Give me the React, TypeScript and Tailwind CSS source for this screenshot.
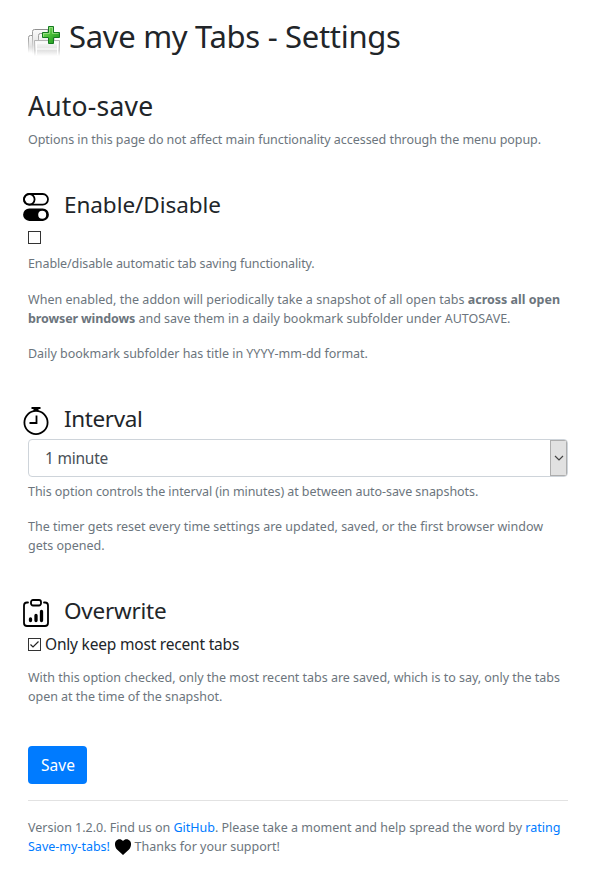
import React from 'react';

const Line = ({ className = '', children }: { className?: string; children: React.ReactNode }) => (
  <span className={`block w-fit whitespace-nowrap ${className}`}>{children}</span>
);

const Note = ({ className = '', children }: { className?: string; children: React.ReactNode }) => (
  <p className={`text-[12.5px] leading-[19.2px] text-[#6c757d] ${className}`}>{children}</p>
);

const Heading = ({ icon, className = '', children }: { icon: React.ReactNode; className?: string; children: React.ReactNode }) => (
  <h3 className="-ml-[5px] flex h-[30px] items-center">
    <span className="mt-1 w-[41px] shrink-0">{icon}</span>
    <span className={`whitespace-nowrap text-[22.5px] leading-[30px] ${className}`}>{children}</span>
  </h3>
);

const TabsIcon = () => (
  <svg width="32" height="32" viewBox="0 0 32 32" className="shrink-0">
    <defs>
      <linearGradient id="paper" x2="0" y2="1"><stop stopColor="#fafafa" /><stop offset=".65" stopColor="#e2e2e2" /><stop offset="1" stopColor="#fff" /></linearGradient>
      <linearGradient id="edge" x2="0" y2="1"><stop stopColor="#909090" /><stop offset=".6" stopColor="#ccc" /><stop offset="1" stopColor="#fff" /></linearGradient>
      <linearGradient id="front" x2="0" y2="1"><stop stopColor="#b4b4b4" /><stop offset=".6" stopColor="#d0d0d0" /><stop offset="1" stopColor="#fff" /></linearGradient>
      <linearGradient id="plus" x2="1" y2="1"><stop stopColor="#8fe070" /><stop offset=".5" stopColor="#45bd35" /><stop offset="1" stopColor="#168d1a" /></linearGradient>
    </defs>
    <g fill="url(#paper)" stroke="url(#edge)">
      <path d="M.5 28V12.500q0-2 2-2H20V28" />
      <path d="M4.500 29V6.500q0-2 2-2H20V29" />
      <path d="M10.500 29V10.500q0-2 2-2H26V29" />
    </g>
    <path d="M6.500 31V15.500h25V31" fill="url(#paper)" stroke="url(#front)" />
    <path d="M8.500 30V17.500M29.500 30V17.500M8 18h22M8 24h22" stroke="#fff" />
    <path d="M20.500 1.500h5v6h6v5h-6v6h-5v-6h-6v-5h6z" fill="url(#plus)" stroke="#147a20" />
    <path d="M21.500 8.500v-6h3v6h6M15.500 11.500v-3h6" fill="none" stroke="#b5eba0" strokeOpacity=".6" />
  </svg>
);

const SwitchIcon = () => (
  <svg width="26" height="28" viewBox="0 0 26 28" fill="none" stroke="#000" strokeWidth="1.800">
    <rect x="1" y="1" width="24" height="10.600" rx="5.300" /><circle cx="6.300" cy="6.300" r="5.300" />
    <rect x="1" y="16.400" width="24" height="10.600" rx="5.300" fill="#000" /><circle cx="19.200" cy="21.700" r="4.900" fill="#fff" />
  </svg>
);

const TimerIcon = () => (
  <svg width="26" height="28" viewBox="0 0 26 28" fill="none" stroke="#000" strokeWidth="1.800">
    <circle cx="13" cy="15.500" r="11.600" /><path d="M8.500 1h9M10.500 3h5M13.500 8.500v7.500H6.500" />
  </svg>
);

const ClipboardIcon = () => (
  <svg width="26" height="28" viewBox="0 0 26 28" fill="none" stroke="#000" strokeWidth="1.800" strokeLinecap="round">
    <path d="M5 3.500H4Q1 3.500 1 6.500V24q0 3 3 3h18q3 0 3-3V6.500q0-3-3-3h-1" />
    <rect x="8" y="1" width="10" height="5.500" rx="2" />
    <path d="M7.500 20v1.500M13 16.500v5M18.500 12.500v9" strokeWidth="3.300" />
  </svg>
);

const Checkbox = ({ checked = false }: { checked?: boolean }) => (
  <span className="flex size-[13px] shrink-0 border border-[#333] bg-white">
    {checked && <svg width="11" height="11" viewBox="0 0 11 11" fill="none"><path d="m1.500 5.500 2.500 2.500 5.500-5.500" stroke="#222" strokeWidth="1.200" /></svg>}
  </span>
);

export default function App() {
  return (
    <main className="flex h-[889px] flex-col items-stretch overflow-hidden bg-white pl-7 pr-[31px] pt-4 font-['Noto_Sans',sans-serif] text-[#212529]">
      <h1 className="flex h-10 items-center gap-[9px] whitespace-nowrap text-[31px] leading-10 tracking-[-0.31px]"><span className="mt-[9px]"><TabsIcon /></span>Save my Tabs - Settings</h1>
      <h2 className="mt-[33px] h-[34px] text-[26.5px] leading-[34px] tracking-[0.22px]">Auto-save</h2>
      <Note className="mt-[7px]"><Line className="tracking-[-0.050px]">Options in this page do not affect main functionality accessed through the menu popup.</Line></Note>

      <section className="mt-[41px]">
        <Heading icon={<SwitchIcon />} className="tracking-[-0.06px]">Enable/Disable</Heading>
        <div className="mt-[11px]"><Checkbox /></div>
        <Note className="mt-[10px]"><Line className="tracking-[-0.1px]">Enable/disable automatic tab saving functionality.</Line></Note>
        <Note className="mt-[16.4px]">
          <Line><span className="tracking-[0.022px]">When enabled, the addon will periodically take a snapshot of all open tabs </span><b>across all open</b></Line>
          <Line><b className="tracking-[-0.13px]">browser windows</b> and save them in a daily bookmark subfolder under AUTOSAVE.</Line>
        </Note>
        <Note className="mt-[15.6px]"><Line className="tracking-[-0.02px]">Daily bookmark subfolder has title in YYYY-mm-dd format.</Line></Note>
      </section>

      <section className="mt-[41px]">
        <Heading icon={<TimerIcon />} className="tracking-[-0.4px]">Interval</Heading>
        <button className="mt-[5px] flex h-[38px] w-[540px] items-stretch justify-between overflow-hidden rounded border border-[#ced4da] pl-4 text-left text-[15.5px] tracking-[-0.22px] text-[#495057]">
          <span className="mt-[2px] self-center">1 minute</span>
          <span className="flex w-[17px] items-center justify-center border border-[#adadad] bg-[#e1e1e1]"><svg width="10" height="6" viewBox="0 0 10 6" fill="none"><path d="m1 1 4 4 4-4" stroke="#444" strokeWidth="1.200" /></svg></span>
        </button>
        <Note className="mt-[5px]"><Line className="tracking-[-0.065px]">This option controls the interval (in minutes) at between auto-save snapshots.</Line></Note>
        <Note className="mt-[16px]">
          <Line className="tracking-[-0.015px]">The timer gets reset every time settings are updated, saved, or the first browser window</Line>
          <Line>gets opened.</Line>
        </Note>
      </section>

      <section className="mt-[40px]">
        <Heading icon={<ClipboardIcon />} className="tracking-[-0.25px]">Overwrite</Heading>
        <label className="mt-[7px] flex h-6 items-center gap-[4px] text-[15.5px] tracking-[-0.2px]"><Checkbox checked /><span className="whitespace-nowrap">Only keep most recent tabs</span></label>
        <Note className="mt-[11.5px]">
          <Line className="tracking-[-0.02px]">With this option checked, only the most recent tabs are saved, which is to say, only the tabs</Line>
          <Line className="tracking-[-0.04px]">open at the time of the snapshot.</Line>
        </Note>
      </section>

      <button className="mt-[39.5px] h-[38px] w-[59px] shrink-0 rounded bg-[#007bff] pl-px pt-px text-[15.500px] text-white">Save</button>
      <footer className="mt-4 border-t border-[#e2e2e2] pt-[17px]">
        <Note>
          <Line className="tracking-[-0.013px]">Version 1.2.0. Find us on <a className="text-[#007bff]">GitHub</a>. Please take a moment and help spread the word by <a className="text-[#007bff]">rating</a></Line>
          <Line><a className="text-[#007bff]">Save-my-tabs!</a> <svg className="ml-[2px] inline-block h-4 w-4 align-[-4px]" viewBox="0 0 16 16" fill="#000"><path d="M8 16 2 10.500C-.5 7.500-.5 3.500 1 2 3-.3 6-.3 8 2c2-2.300 5-2.300 7 0 1.500 1.500 1.500 5.500-1 8.500z" /></svg> Thanks for your support!</Line>
        </Note>
      </footer>
    </main>
  );
}
